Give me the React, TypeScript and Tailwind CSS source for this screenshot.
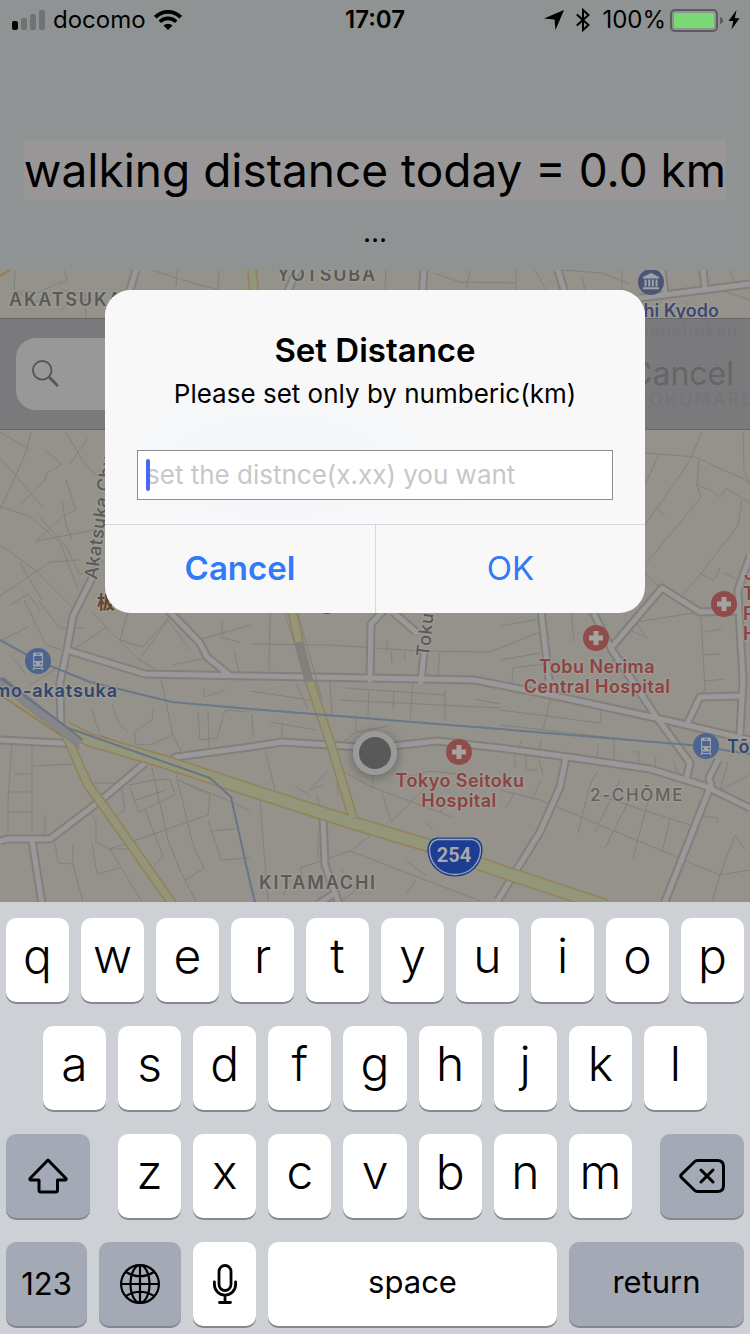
import React from "react";

const MINOR_ROADS = [
  "M15 270 14 291 40 292 62 281M64 270 67 280 57 287M14 291 36 302 62 290 90 296",
  "M152 270 186 281M177 270 176 287M186 281 219 290M219 270 218 290M85 293 86 318M60 312 70 300 96 300",
  "M386 270 385 290M470 270 466 290M434 273 460 282 515 283M516 270 516 290M535 270 546 290M582 277 585 290M622 270 622 290M562 270 602 273 630 284M686 300 688 318M720 290 750 300M730 270 735 282",
  "M31 432 25 455 0 510M66 432 85 465 105 482M0 432 30 450M88 438 70 464M0 458 42 506M45 450 62 464 47 473 45 480 20 505M66 480 76 510 64 515 35 542 36 541 95 530M0 506 30 517 60 542 78 590M40 518 65 545 80 575 105 560M0 545 35 570 75 610M0 596 50 562 80 560M20 563 42 600M10 605 28 594 40 610M62 500 66 525 72 540",
  "M645 453 695 457 750 482M659 454 645 485M702 432 690 460 678 478 645 525M743 432 744 470 750 485M697 485 710 490 720 497 726 488 750 503M699 460 697 485 701 497 645 565M657 508 665 516M742 500 738 525 700 575 683 594M700 574 714 580 720 568M645 574 660 588M724 573 738 580",
  "M38 600 60 628 85 628M24 600 46 645 62 650M0 641 30 626M10 655 25 673M57 668 30 685M92 612 106 627 139 660 166 675M106 627 73 650M128 612 120 640 143 647M143 647 174 612M139 660 168 620 190 650M172 665 207 658M198 640 250 625M222 620 222 638 240 642M234 650 240 676",
  "M160 675 173 735 185 760M173 735 150 745 135 744 135 731 152 720 153 710M92 710 100 735 118 742M112 705 120 725 128 732M198 712 200 740 217 738 225 710 250 712M208 710 209 750M204 688 204 697 225 690",
  "M12 740 8 800 8 840M14 774 32 774M8 792 32 792M8 812 32 812M32 740 32 840M33 766 75 764M94 783 122 783M45 815 45 840M90 813 96 820 96 842M55 843 58 863 73 864 83 902M96 842 110 849 132 849M73 845 73 863M92 843 97 874 120 868",
  "M129 785 155 780 170 779 175 795 139 812 129 786M152 768 168 840 180 870 196 902M133 801 166 790M175 770 193 845 204 868 186 880M182 782 210 795 208 815 165 830 110 849 142 902M178 780 232 802 250 811M208 820 221 860 250 858M210 831 236 829M121 782 125 810 105 822M145 810 163 856 154 866",
  "M270 613 269 670M250 644 330 645 420 651 490 652 500 648M387 640 387 653M391 650 392 663M405 652 405 660M440 652 438 676M330 680 332 715M345 688 445 695M340 700 500 708M369 690 368 716M394 690 393 710M413 683 410 719M445 690 445 721M250 691 310 700M296 683 308 709M474 699 500 704",
  "M252 714 253 737M282 722 282 740M270 722 317 730M356 718 356 732 340 745M356 732 389 726M265 750 275 790M328 770 310 790 323 785M295 787 310 795M335 750 338 795M338 769 372 787 452 817M373 770 373 788M382 792 391 822 435 778M401 778 430 771 465 775M440 812 448 805M425 822 433 830M260 800 268 902",
  "M350 851 480 901M405 860 425 875M370 836 350 851 300 868 303 880M340 868 356 890 341 902M317 795 322 820M318 835 318 860M284 895 289 880M416 880 406 894",
  "M500 626 540 619M500 648 540 632M571 612 574 642M612 668 613 655M500 660 540 653M512 683 513 668 560 662M500 710 600 723 602 704M551 697 543 730M500 725 640 741M521 740 519 748M541 740 540 750M636 622 700 612M701 615 705 690 698 696M704 632 722 629M704 655 720 654M705 681 725 679M636 622 647 638 630 630",
  "M598 745 597 760M614 740 614 760M634 752 639 752 639 764M656 757 655 766M515 754 515 768M526 755 526 770 538 770M538 755 543 775M500 790 540 800 660 850 720 875 750 870M597 795 690 825M515 792 506 808M540 782 532 800M598 770 590 785M620 780 595 832M590 785 578 833M635 788 605 848M651 790 633 858M670 818 662 852M728 762 720 790 750 775M700 816 717 818 717 823M745 850 735 835 720 875 712 902M674 762 678 775 686 780",
];

const WHITE_ROADS = [
  "M136 270 127 300",
  "M297 270 284 300",
  "M424 270 422 300",
  "M558 270 567 300",
  "M662 270 665 294",
  "M703 270 705 288",
  "M640 298 750 284",
  "M94 574 80 602 73 616 67 650 60 682 61 727",
  "M67 650 145 674 250 676 370 678 474 680 500 685 560 697 665 720 750 740",
  "M168 610 200 643 207 657 228 674",
  "M0 740 80 744",
  "M0 841 8 839 50 839 100 801 145 763",
  "M32 840 42 904",
  "M172 760 176 757 250 747 282 742 375 748 437 741 500 748 568 757 650 769 705 786 750 808",
  "M370 680 371 624 384 610",
  "M393 612 416 632",
  "M424 652 421 682",
  "M323 818 325 865 339 904",
  "M334 894 318 904",
  "M541 610 549 680",
  "M592 610 612 650 655 715 690 763 686 780",
  "M611 648 662 588 700 612 738 611",
  "M750 556 738 590 739 611 743 680 740 733",
  "M688 722 700 697 742 696",
  "M566 757 560 787 540 832 498 900",
  "M718 760 709 778 711 785 664 904",
];

const MAIN_ROAD = "M66 728 90 740 165 762 250 790 350 822 430 846 500 871 606 906";

const HIGHWAYS = [
  "M66 735 88 785 105 808 174 906",
  "M292 610 299 642",
  "M310 682 332 748 353 818",
  "M252 270 255 300",
];

type LabelProps = {
  x: number;
  y: number;
  children: string;
  className: string;
  anchor?: "start" | "middle" | "end";
  rotate?: number;
};

function MapLabel({ x, y, children, className, anchor = "start", rotate }: LabelProps) {
  return (
    <text
      x={x}
      y={y}
      textAnchor={anchor}
      transform={rotate ? `rotate(${rotate} ${x} ${y})` : undefined}
      className={className}
      stroke="#a3a19b"
      strokeOpacity="0.55"
      strokeWidth="3"
      strokeLinejoin="round"
      paintOrder="stroke"
    >
      {children}
    </text>
  );
}

function HospitalPin({ x, y }: { x: number; y: number }) {
  return (
    <g transform={`translate(${x} ${y})`}>
      <circle r="13" fill="#8f4c4b" />
      <path d="M-2.500 -7h5v4.500h4.500v5h-4.500v4.500h-5v-4.500h-4.500v-5h4.500z" fill="#a5a3a1" />
    </g>
  );
}

function TrainPin({ x, y }: { x: number; y: number }) {
  return (
    <g transform={`translate(${x} ${y})`}>
      <circle r="13" fill="#4c648f" />
      <path
        fillRule="evenodd"
        fill="#a0a3a8"
        d="M-3.500 -8.500h7q1.500 0 1.500 1.500v11q0 1.500-1.500 1.500h-7q-1.500 0-1.500-1.500v-11q0-1.500 1.500-1.500zM-3.800 -5v5h7.600v-5zM-2 -7.300v1h4v-1zM-3 1.500a1 1 0 1 0 .01 0zM3 1.500a1 1 0 1 0 .01 0z"
      />
      <path d="M-3.500 5.500-5 9M3.500 5.500 5 9M-4.200 7.500h8.400" stroke="#a0a3a8" strokeWidth="1.200" fill="none" />
    </g>
  );
}

const gray = "text-[18px] font-semibold tracking-widest fill-[#5a5a58]";
const red = "text-[18px] font-semibold tracking-wide fill-[#8e4341]";
const blue = "text-[18px] font-semibold tracking-wider fill-[#31466c]";
const street = "text-[18px] font-medium tracking-wide fill-[#5a5a58]";

function MapCanvas() {
  return (
    <svg
      viewBox="0 270 750 632"
      preserveAspectRatio="xMidYMin slice"
      className="absolute inset-0 h-full w-full"
      role="img"
      aria-label="Map of Akatsuka, Kitamachi and Tokumaru"
    >
      <defs>
        <filter id="dotShadow" x="-50%" y="-50%" width="200%" height="200%">
          <feDropShadow dx="0" dy="2" stdDeviation="6" floodOpacity="0.35" />
        </filter>
      </defs>
      <rect y="270" width="750" height="632" fill="#94928b" />
      <g fill="none" stroke="#82817c" strokeWidth="1">
        {MINOR_ROADS.map((d) => (
          <path key={d} d={d} />
        ))}
      </g>
      <g fill="none" strokeLinejoin="round">
        {WHITE_ROADS.map((d) => (
          <path key={d} d={d} stroke="#847f79" strokeWidth="9" />
        ))}
        {WHITE_ROADS.map((d) => (
          <path key={d} d={d} stroke="#9a9999" strokeWidth="5" strokeLinecap="round" />
        ))}
        <path d="M299 642 309 682" stroke="#82807b" strokeWidth="9" />
        <path d="M284 610 318 720M297 610 322 700" stroke="#82817c" strokeWidth="1" />
        <path d="M0 276 12 269" stroke="#9a7d4f" strokeWidth="2" />
        <path d="M0 691 66 735" stroke="#937e58" strokeWidth="8" />
        <path d="M0 690 66 734" stroke="#949679" strokeWidth="6" />
        {HIGHWAYS.map((d) => (
          <path key={d} d={d} stroke="#93805c" strokeWidth="10" />
        ))}
        <path d={MAIN_ROAD} stroke="#93805c" strokeWidth="14" />
        <path d={MAIN_ROAD} stroke="#949679" strokeWidth="11" />
        {HIGHWAYS.map((d) => (
          <path key={d} d={d} stroke="#949679" strokeWidth="7" />
        ))}
        <path d="M0 681 80 743" stroke="#75706f" strokeWidth="10" />
        <path d="M0 682 80 744" stroke="#85858a" strokeWidth="8" />
        <path d="M0 640 38 661 90 682 172 702 250 709 500 729 690 745 750 754" stroke="#6b7789" strokeWidth="2" />
        <path d="M0 678 68 728 210 778 231 797 250 882 256 906" stroke="#69748a" strokeWidth="2" />
      </g>

      <MapLabel x={9} y={306} className={gray}>AKATSUKA</MapLabel>
      <MapLabel x={277} y={281} className={gray}>YOTSUBA</MapLabel>
      <MapLabel x={719} y={317} anchor="end" className="fill-[#3e4a70] text-[18px] font-semibold">Itabashi Kyodo</MapLabel>
      <MapLabel x={738} y={337} anchor="end" className="fill-[#3e3e48] text-[18px] font-semibold tracking-wide">Genshokan</MapLabel>
      <MapLabel x={636} y={406} className="fill-[#3a3a3a] text-[18px] font-semibold tracking-widest">TOKUMARU</MapLabel>
      <MapLabel x={97} y={580} rotate={-82} className={street}>Akatsuka Chuo</MapLabel>
      <MapLabel x={429} y={657} rotate={-84} className={street}>Tokumaru</MapLabel>
      <MapLabel x={97} y={609} className="fill-[#63462c] text-[18px] font-bold">板</MapLabel>
      <MapLabel x={259} y={889} className={gray}>KITAMACHI</MapLabel>
      <MapLabel x={590} y={801} className="fill-[#62625f] text-[17px] font-medium tracking-widest">2-CHŌME</MapLabel>
      <MapLabel x={597} y={673} anchor="middle" className={red}>Tobu Nerima</MapLabel>
      <MapLabel x={597} y={693} anchor="middle" className={red}>Central Hospital</MapLabel>
      <MapLabel x={460} y={787} anchor="middle" className={red}>Tokyo Seitoku</MapLabel>
      <MapLabel x={459} y={807} anchor="middle" className={red}>Hospital</MapLabel>
      <MapLabel x={744} y={580} className={red}>J</MapLabel>
      <MapLabel x={743} y={600} className={red}>T</MapLabel>
      <MapLabel x={743} y={620} className={red}>P</MapLabel>
      <MapLabel x={743} y={640} className={red}>H</MapLabel>
      <MapLabel x={118} y={697} anchor="end" className={blue}>mo-akatsuka</MapLabel>
      <MapLabel x={727} y={753} className={blue}>Tō</MapLabel>
      <circle cx="327" cy="606" r="8" fill="#63462c" />

      <TrainPin x={38} y={661} />
      <TrainPin x={706} y={746} />
      <HospitalPin x={724} y={604} />
      <HospitalPin x={596} y={638} />
      <HospitalPin x={459} y={752} />
      <g transform="translate(651 282)">
        <circle r="13" fill="#4b5675" />
        <path
          fill="#a0a3aa"
          d="M0 -9 8 -5v1.500h-16v-1.500zM-6.500 -2.500h2v7h-2zM-2.800 -2.500h2v7h-2zM.8 -2.500h2v7h-2zM4.500 -2.500h2v7h-2zM-8 5.200h16v2h-16z"
        />
      </g>

      <circle cx="375" cy="753" r="22" fill="#9a9a9a" filter="url(#dotShadow)" />
      <circle cx="375" cy="753" r="16" fill="#595959" />

      <path
        d="M437 837.500h36q8 1 9.500 10c1 16-11 29-27.500 29s-28.500-13-27.500-29q1.500-9 9.500-10z"
        fill="#1c3d92"
      />
      <path
        d="M438 839.500h34q7 1 8.500 8.500c.5 15-10.500 26.500-25.500 26.500s-26-11.500-25.500-26.500q1.500-7.500 8.500-8.500z"
        fill="none"
        stroke="#a0a3ac"
        strokeWidth="1.300"
      />
      <text x="454" y="862" textAnchor="middle" className="fill-[#a6a8ad] font-[Roboto] text-[20px] font-bold">
        254
      </text>
    </svg>
  );
}

function StatusBar() {
  return (
    <div className="grid h-10 grid-cols-3 items-center text-[24px] leading-10">
      <div className="flex items-center pl-3">
        <svg width="33" height="20" viewBox="0 0 33 20" aria-hidden="true">
          <rect x="0" y="11" width="6" height="9" rx="2" fill="#000" />
          <rect x="9" y="8" width="6" height="12" rx="2" fill="#707373" />
          <rect x="18" y="4" width="6" height="16" rx="2" fill="#707373" />
          <rect x="27" y="0" width="6" height="20" rx="2" fill="#707373" />
        </svg>
        <span className="ml-2">docomo</span>
        <svg className="ml-2" width="28" height="20" viewBox="0 0 28 20" aria-hidden="true">
          <path d="M1.300 7.200a17.800 17.800 0 0 1 25.400 0" fill="none" stroke="#000" strokeWidth="3.800" />
          <path d="M5.800 11.800a11.500 11.500 0 0 1 16.400 0" fill="none" stroke="#000" strokeWidth="3.600" />
          <path d="M14 20 9.400 15.600a6.600 6.600 0 0 1 9.200 0z" fill="#000" />
        </svg>
      </div>
      <div className="text-center font-semibold">17:07</div>
      <div className="flex items-center justify-end pr-2.5">
        <svg width="20" height="20" viewBox="0 0 20 20" aria-hidden="true">
          <path d="M20 0 11.500 20 10.500 9.500 0 8.500z" fill="#000" />
        </svg>
        <svg className="ml-3" width="14" height="24" viewBox="0 0 14 24" aria-hidden="true">
          <path d="M.8 6.500 12.500 17 7 22V2l5.500 5L.8 17.500" fill="none" stroke="#000" strokeWidth="2" />
        </svg>
        <span className="ml-3">100%</span>
        <svg className="ml-1" width="54" height="24" viewBox="0 0 54 24" aria-hidden="true">
          <rect x="1" y="2" width="46" height="21" rx="4" fill="none" stroke="#5a5c5e" strokeWidth="2" />
          <rect x="4" y="5" width="40" height="15" rx="1.500" fill="#78d975" />
          <path d="M50 9q3 1 3 3.500t-3 3.500z" fill="#5a5c5e" />
        </svg>
        <svg className="ml-1" width="12" height="20" viewBox="0 0 12 20" aria-hidden="true">
          <path d="M8.500 0 .5 11h4.800L3.500 19.500 11.500 8.200H6.800z" fill="#000" />
        </svg>
      </div>
    </div>
  );
}

function SearchBar() {
  return (
    <div className="absolute inset-x-0 top-12 flex h-28 items-center gap-4 border-y border-[#676769] bg-[#78787b]/95 px-4">
      <label className="flex h-[72px] flex-1 items-center rounded-[20px] bg-[#989898] pl-4">
        <svg width="30" height="30" viewBox="0 0 30 30" fill="none" stroke="#555" aria-hidden="true">
          <circle cx="11" cy="11" r="10" strokeWidth="2" />
          <path d="M18.500 18.500 27 27" strokeWidth="3" strokeLinecap="round" />
        </svg>
        <input type="search" aria-label="Search places" className="ml-3 w-full min-w-0 bg-transparent text-[28px] outline-none" />
      </label>
      <button type="button" className="text-[32px] text-[#656568]">Cancel</button>
    </div>
  );
}

function DistanceDialog() {
  return (
    <div className="absolute inset-0 flex items-center justify-center">
      <form
        role="dialog"
        aria-labelledby="dialog-title"
        onSubmit={(e) => e.preventDefault()}
        className="w-[540px] max-w-full overflow-hidden rounded-[26px] bg-[#f8f8f8]"
      >
        <div className="bg-radial-[at_32%_75%] from-[#f3f6fa] to-[#f8f8f8] to-40% px-8 pt-10 pb-6 text-center">
          <h2 id="dialog-title" className="text-[33px] leading-10 font-semibold">Set Distance</h2>
          <label htmlFor="distance" className="mt-1.5 block text-[26px] leading-9">
            Please set only by numberic(km)
          </label>
          <div className="relative mt-[38px]">
            <input
              id="distance"
              inputMode="decimal"
              placeholder="set the distnce(x.xx) you want"
              className="block h-[50px] w-full border border-[#8e8e93] bg-white px-2 text-[26px] outline-none placeholder:text-[#c7c7cc]"
            />
            <span className="absolute top-[9px] left-[9px] h-8 w-1 rounded-sm bg-[#4a69f0]" />
          </div>
        </div>
        <div className="grid grid-cols-2 border-t border-[#d5d6da] text-[33px] text-[#327af6]">
          <button type="button" className="h-[88px] font-semibold">Cancel</button>
          <button type="submit" className="h-[88px] border-l border-[#d9d9dc]">OK</button>
        </div>
      </form>
    </div>
  );
}

const keyBase =
  "flex h-[84px] min-w-0 items-center justify-center rounded-[10px] shadow-[0_2px_0_#86888c]";
const letterKey = `${keyBase} flex-1 bg-white pb-2 text-[48px] leading-none font-light`;
const darkKey = `${keyBase} bg-[#a3a9b5]`;

function Letters({ keys }: { keys: string }) {
  return (
    <>
      {keys.split("").map((k) => (
        <button key={k} type="button" className={letterKey}>
          {k}
        </button>
      ))}
    </>
  );
}

function Keyboard() {
  return (
    <div className="flex flex-col gap-6 bg-[#cdd0d5] px-1.5 pt-4 pb-2">
      <div className="flex gap-3">
        <Letters keys="qwertyuiop" />
      </div>
      <div className="flex gap-3 px-[37px]">
        <Letters keys="asdfghjkl" />
      </div>
      <div className="flex gap-7">
        <button type="button" aria-label="Shift" className={`${darkKey} w-[84px]`}>
          <svg width="40" height="36" viewBox="0 0 40 36" fill="none" stroke="#000" strokeWidth="3" strokeLinejoin="round" aria-hidden="true">
            <path d="M20 2 38 20.500q.5 1.500-1 1.500H29.500V32q0 2-2 2H13q-2 0-2-2V22H3q-1.500 0-1-1.500z" />
          </svg>
        </button>
        <div className="flex flex-1 gap-3">
          <Letters keys="zxcvbnm" />
        </div>
        <button type="button" aria-label="Delete" className={`${darkKey} w-[84px]`}>
          <svg width="46" height="34" viewBox="0 0 46 34" fill="none" stroke="#000" strokeWidth="3" strokeLinecap="round" strokeLinejoin="round" aria-hidden="true">
            <path d="M18.500 1.500H38.500q6 0 6 6v19q0 6-6 6H18.500q-1.800 0-3-1.200L2.200 18.200q-1-1.200 0-2.400L15.500 2.700q1.200-1.200 3-1.200z" />
            <path d="M22 11 34 23M34 11 22 23" />
          </svg>
        </button>
      </div>
      <div className="flex gap-3">
        <button type="button" className={`${darkKey} w-[81px] text-[31px]`}>123</button>
        <button type="button" aria-label="Next keyboard" className={`${darkKey} w-[82px]`}>
          <svg width="40" height="40" viewBox="0 0 40 40" fill="none" stroke="#000" strokeWidth="2.200" aria-hidden="true">
            <circle cx="20" cy="20" r="18.900" />
            <ellipse cx="20" cy="20" rx="9.500" ry="18.900" />
            <path d="M20 1v38M1 20h38M6 8q14 8.500 28 0M6 32q14-8.500 28 0" />
          </svg>
        </button>
        <button type="button" aria-label="Dictation" className={`${keyBase} w-[63px] bg-white`}>
          <svg width="24" height="40" viewBox="0 0 24 40" fill="none" stroke="#000" strokeWidth="2.800" strokeLinecap="round" aria-hidden="true">
            <rect x="6" y="1.500" width="12" height="25" rx="6" />
            <path d="M1.400 18v2.500a10.600 10.600 0 0 0 21.200 0V18M12 31.500v7M6.500 38.500h11" />
          </svg>
        </button>
        <button type="button" className={`${keyBase} flex-1 bg-white pb-1 text-[31px]`}>space</button>
        <button type="button" className={`${darkKey} w-[175px] pb-1 text-[31px]`}>return</button>
      </div>
    </div>
  );
}

export default function App() {
  return (
    <main className="flex min-h-screen flex-col font-[Inter,'Noto_Sans_CJK_JP',sans-serif] text-black">
      <div className="relative flex flex-1 flex-col">
        <header className="bg-[#8f9393] pb-[18px] text-center">
          <StatusBar />
          <h1 className="mt-[100px]">
            <span className="inline-block bg-[#989696] text-[46px] leading-[60px]">
              walking distance today = 0.0 km
            </span>
          </h1>
          <p className="mt-3 text-[28px] leading-10">...</p>
        </header>
        <section className="relative min-h-[400px] flex-1 overflow-hidden">
          <MapCanvas />
          <SearchBar />
        </section>
        <DistanceDialog />
      </div>
      <Keyboard />
    </main>
  );
}
